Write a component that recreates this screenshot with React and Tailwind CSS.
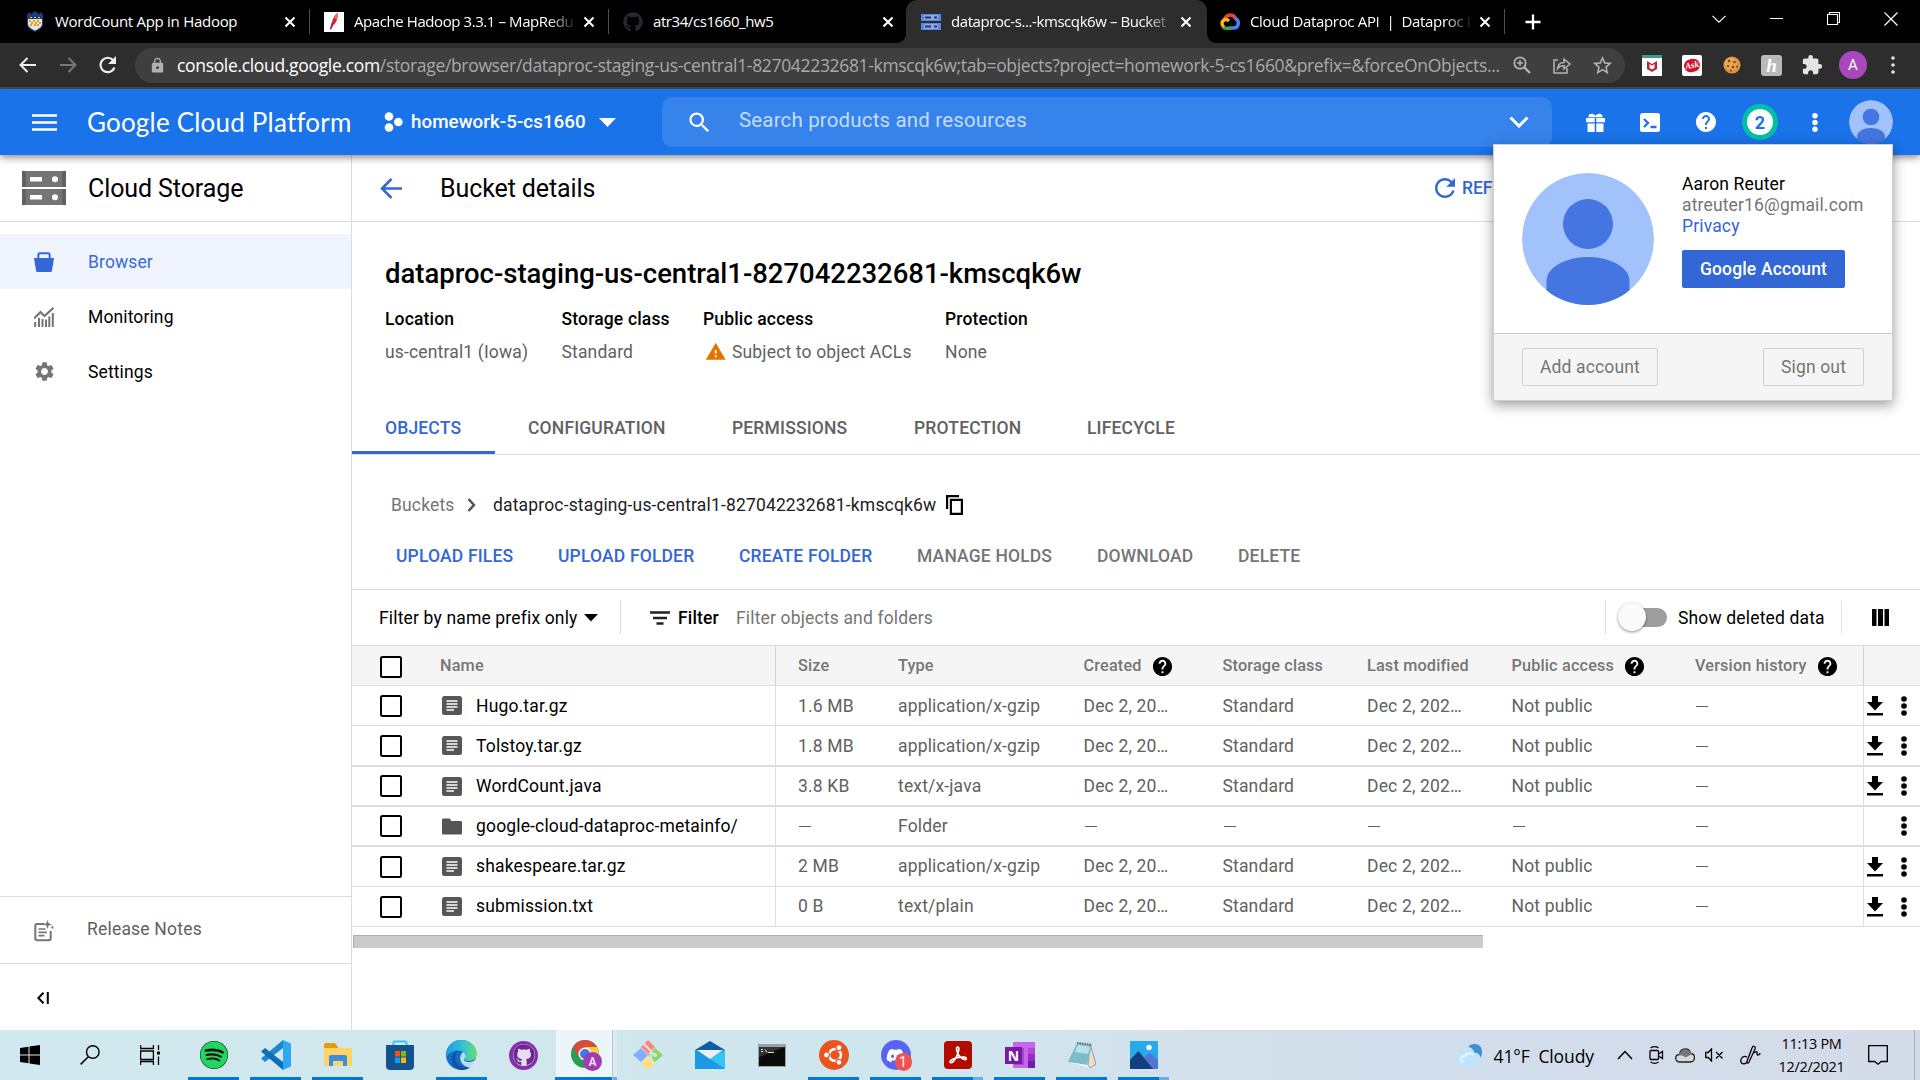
import React from "react";
import { MdSearch, MdSettings, MdWarning, MdHelp, MdExtension, MdLock, MdRefresh, MdStarOutline } from "react-icons/md";
import { FaGithub, FaSpotify, FaDiscord } from "react-icons/fa";

function Svg({ w, h, children, className = "" }) {
  return (
    <svg width={w} height={h} viewBox={`0 0 ${w} ${h}`} fill="none" className={"shrink-0 " + className}>
      {children}
    </svg>
  );
}

const Close = () => (
  <Svg w={12} h={12}><path d="M1.5 1.5l9 9M10.5 1.5l-9 9" stroke="#fff" strokeWidth="2.1" /></Svg>
);

/* ---------- favicons ---------- */
const Crest = () => (
  <Svg w={20} h={22}>
    <path d="M2 4l2-3 2 2 4-3 4 3 2-2 2 3v9c0 4-4 6-8 8-4-2-8-4-8-8z" fill="#1d3a7a" />
    <path d="M3 5h14v8c0 3-3.500 5-7 6.500C6.500 18 3 16 3 13z" fill="#e8e6dc" />
    <path d="M4 9h2v2H4zM8 9h2v2H8zM12 9h2v2h-2zM6 11h2v2H6zM10 11h2v2h-2zM14 11h2v2h-2zM5 13h2v2H5zM9 13h2v2H9zM12 13h2v2h-2z" fill="#d9a520" />
    <path d="M3 5h14v3H3z" fill="#1d3a7a" /><path d="M5 6h2v1H5zM9 6h2v1H9zM13 6h2v1h-2z" fill="#e8c558" />
  </Svg>
);
const Feather = () => (
  <Svg w={20} h={20}>
    <path d="M0 0h20v20H0z" fill="#fff" />
    <path d="M14 1c-3 1-5 5-6 9l-2 7 1 .5 2-4c3-2 5-7 5-12.500z" fill="#d4213d" />
    <path d="M14 1c-2 1-3 3-4 5l3 1c1-2 1-4 1-6z" fill="#f0803c" />
    <path d="M8 10l-2 7 1 .5 2-4z" fill="#8a2a7c" />
  </Svg>
);
const StorageFav = () => (
  <Svg w={20} h={16}>
    <path d="M0 0h20v7H0zM0 9h20v7H0z" fill="#5c85de" />
    <path d="M3 1h14v5H3zM3 10h14v5H3z" fill="#86a8ee" />
    <path d="M4 2.500h6v2H4zM13 2.500h3v2h-3zM4 11.500h6v2H4zM13 11.500h3v2h-3z" fill="#26375f" />
  </Svg>
);
const CloudFav = () => (
  <Svg w={20} h={17}>
    <path d="M4.500 6.500C5.500 3.500 8 2 10.500 2s4 1.500 5 3.500" stroke="#ea4335" strokeWidth="3.600" />
    <path d="M15 5c2.500 1.500 3.500 3.500 3.300 5.500-.2 2.600-2 4.500-4.800 4.500H10" stroke="#4285f4" strokeWidth="3.400" />
    <path d="M11 15.200H6c-1.200 0-2-.3-2.800-1" stroke="#34a853" strokeWidth="3.400" />
    <path d="M4 14c-2.500-2-2.800-5 0-7 2-1 3.500-.5 5 1" stroke="#fbbc04" strokeWidth="3.400" />
  </Svg>
);

function Tab({ icon, title, last, className = "", fade = "" }) {
  return (
    <div className={"flex h-full shrink-0 items-center " + className}>
      <div className="flex w-5 shrink-0 justify-center">{icon}</div>
      <div className={"ml-[10px] w-[221px] shrink-0 whitespace-pre " + fade}>{title}</div>
      <div className="ml-[8px]"><Close /></div>
      {last && <div className="ml-[13px] h-[25px] w-px bg-[#505050]" />}
    </div>
  );
}

const fadeOut = "[mask-image:linear-gradient(to_right,#000_88%,transparent_101%)]";

function TabStrip() {
  return (
    <div className="flex h-[43px] items-center bg-black font-['Open_Sans',sans-serif] text-[15px] tracking-[-0.42px] text-white">
      <Tab className="w-[311px] pl-[25px] tracking-[-0.28px]" icon={<Crest />} title="WordCount App in Hadoop" last />
      <Tab className="w-[299px] pl-[13px]" icon={<Feather />} title="Apache Hadoop 3.3.1 – MapRedu" last fade={fadeOut} />
      <Tab className="w-[296px] pl-[13px]" icon={<FaGithub size={20} color="#24292f" />} title="atr34/cs1660_hw5" />
      <div className="relative h-full w-[301px] rounded-t-[11px] bg-[#2d2d2d]">
        <Tab className="pl-[15px]" icon={<StorageFav />} title="dataproc-s...-kmscqk6w – Bucket" fade={fadeOut} />
        <svg className="absolute bottom-0 -left-[10px]" width="10" height="10"><path d="M10 0v10H0C6 10 10 6 10 0z" fill="#2d2d2d" /></svg>
        <svg className="absolute -right-[10px] bottom-0" width="10" height="10"><path d="M0 0v10h10C4 10 0 6 0 0z" fill="#2d2d2d" /></svg>
      </div>
      <Tab className="w-[298px] pl-[13px] tracking-[-0.34px]" icon={<CloudFav />} title="Cloud Dataproc API  |  Dataproc D" last fade={fadeOut} />
      <Svg w={16} h={16} className="ml-[20px]"><path d="M8 .5v15M.5 8h15" stroke="#fff" strokeWidth="2.300" /></Svg>
      <div className="ml-[171px] flex items-center pb-[6px]">
        <Svg w={14} h={8}><path d="M.5.8L7 7.200 13.500.8" stroke="#fff" strokeWidth="1.100" /></Svg>
        <Svg w={13} h={1} className="ml-[44px]"><path d="M0 .5h13" stroke="#fff" /></Svg>
        <Svg w={13} h={13} className="ml-[44px]"><path d="M.5 2.500h10v10H.5zM2.500 2.500v-2h10v10h-2" stroke="#fff" strokeWidth="1.100" /></Svg>
        <Svg w={14} h={14} className="ml-[44px]"><path d="M.5.5l13 13M13.500.5l-13 13" stroke="#fff" strokeWidth="1.200" /></Svg>
      </div>
    </div>
  );
}

function AddressBar() {
  return (
    <div className="flex h-[46px] items-center border-b-2 border-[#4d4d4d] bg-[#2d2d2d]">
      <Svg w={18} h={16} className="ml-[19px]"><path d="M17 8H2M8.500 1L1.500 8l7 7" stroke="#eee" strokeWidth="2" /></Svg>
      <Svg w={18} h={16} className="ml-[22px]"><path d="M1 8h15M9.500 1l7 7-7 7" stroke="#777" strokeWidth="2" /></Svg>
      <Svg w={20} h={18} className="ml-[21px]"><path d="M16.500 11.500A7.200 7.200 0 1 1 15 4" stroke="#eee" strokeWidth="2.200" /><path d="M18 0v8h-8z" fill="#eee" /></Svg>
      <div className="ml-[17px] flex h-[35px] w-[1490px] shrink-0 items-center rounded-full bg-[#3f3f3f]">
        <MdLock size={17} color="#aeb2b8" className="ml-[14px] shrink-0" />
        <div className="ml-[11px] w-[1327px] shrink-0 font-['Open_Sans',sans-serif] text-[17.5px] tracking-[-0.33px] whitespace-nowrap text-[#a9a9a9]">
          <span className="text-white">console.cloud.google.com</span>/storage/browser/dataproc-staging-us-central1-827042232681-kmscqk6w;tab=objects?project=homework-5-cs1660&amp;prefix=&amp;forceOnObjects...
        </div>
        <Svg w={18} h={18} className="ml-[9px]"><circle cx="7" cy="7" r="5.700" stroke="#b4b4b4" strokeWidth="1.700" /><path d="M11.300 11.300l5.700 5.700" stroke="#b4b4b4" strokeWidth="2.300" /><path d="M7 4v6M4 7h6" stroke="#b4b4b4" strokeWidth="1.500" /></Svg>
        <Svg w={20} h={18} className="ml-[21px]"><path d="M6 4H2v13h13v-5M5.500 12.500c.5-4 3-6 6.500-6V3l6 5-6 5V9.800c-3 0-5 .7-6.500 2.700z" stroke="#b4b4b4" strokeWidth="1.500" /></Svg>
        <MdStarOutline size={23} color="#b4b4b4" className="ml-[19px] shrink-0" />
      </div>
      <Svg w={20} h={21} className="ml-[17px]"><path d="M0 0h20v21H0z" fill="#fff" /><path d="M0 0h20v3H0z" fill="#3d9c84" /><path d="M5 6l5 3 5-3v8l-5 3-5-3z" fill="#c8202f" /><path d="M7.500 9l2.500 1.500L12.500 9v4L10 14.500 7.500 13z" fill="#fff" /></Svg>
      <div className="ml-[20px] flex h-[21px] w-5 shrink-0 items-center justify-center rounded-[2px] bg-white"><span className="-rotate-12 rounded-full bg-[#d0142c] px-px font-['Liberation_Serif',serif] text-[9px] leading-[13px] font-bold text-white italic">Ask</span></div>
      <Svg w={18} h={18} className="ml-[21px]"><circle cx="9" cy="9" r="8.600" fill="#dc9340" /><circle cx="8" cy="8" r="6.500" fill="#e6a757" /><g fill="#7a4018"><circle cx="6" cy="5" r="1.200" /><circle cx="11.500" cy="6" r="1.200" /><circle cx="5" cy="10" r="1.100" /><circle cx="10" cy="11" r="1.300" /><circle cx="14" cy="10.500" r="1" /><circle cx="8" cy="14.500" r="1" /></g></Svg>
      <div className="ml-[20px] flex h-[21px] w-[21px] shrink-0 items-center justify-center rounded-[3px] bg-[#b9b9b9] font-['Liberation_Serif',serif] text-[19px] leading-none font-bold text-white italic">h</div>
      <MdExtension size={22} color="#e4e4e4" className="ml-[19px] shrink-0" />
      <div className="ml-[16px] flex h-7 w-7 shrink-0 items-center justify-center rounded-full bg-[#ab47bc] text-[15px] text-white">A</div>
      <Svg w={4} h={18} className="ml-[24px]"><g fill="#e4e4e4"><circle cx="2" cy="2" r="1.800" /><circle cx="2" cy="9" r="1.800" /><circle cx="2" cy="16" r="1.800" /></g></Svg>
    </div>
  );
}

function Avatar({ size, className = "" }) {
  return (
    <svg width={size} height={size} viewBox="0 0 132 132" className={"shrink-0 rounded-full " + className}>
      <circle cx="66" cy="66" r="66" fill="#a1c2fa" />
      <circle cx="66" cy="51" r="25" fill="#4575e0" />
      <path d="M24.500 140V108c0-14 20-24 41.500-24s41.500 10 41.500 24v32z" fill="#4575e0" />
    </svg>
  );
}

function CloudHeader() {
  return (
    <div className="relative z-10 flex h-[66px] items-center bg-[#1a73e8] text-white shadow-[0_2px_8px_rgba(0,0,0,0.5)]">
      <Svg w={25} h={17} className="ml-[32px]"><path d="M0 1.500h25M0 8.500h25M0 15.500h25" stroke="#fff" strokeWidth="2.700" /></Svg>
      <div className="ml-[30px] w-[297px] shrink-0 font-['Lato',sans-serif] text-[26px] tracking-[0.2px] whitespace-nowrap">Google Cloud Platform</div>
      <Svg w={19} h={20}><g fill="#fff"><circle cx="5" cy="4.500" r="4.300" /><circle cx="14.300" cy="10" r="4.300" /><circle cx="5" cy="15.500" r="4.300" /></g></Svg>
      <div className="ml-[8px] w-[188px] shrink-0 pt-px text-[18.75px] font-medium tracking-[0.05px] whitespace-nowrap">homework-5-cs1660</div>
      <Svg w={17} h={9}><path d="M0 0h17L8.500 9z" fill="#fff" /></Svg>
      <div className="ml-[46px] flex h-[50px] w-[890px] shrink-0 items-center rounded-[10px] bg-[#3683eb]">
        <MdSearch size={27} className="ml-[24px] shrink-0" />
        <div className="ml-[26px] w-[770px] shrink-0 pb-[3px] text-[20.500px] tracking-[0.16px] text-[#c4dbfa]">Search products and resources</div>
        <Svg w={20} h={12}><path d="M1.500 1.500L10 10l8.500-8.500" stroke="#fff" strokeWidth="3" /></Svg>
      </div>
      <Svg w={19} h={19} className="ml-[34px]"><path d="M1.500 10.500h7.200V19H1.500zM10.300 10.500h7.200V19h-7.200zM0 5h8.700v4.300H0zM10.300 5H19v4.300h-8.700z" fill="#fff" /><path d="M2.500 4.300c-.5-4 4-4.500 7-1.500 3-3 7.500-2.500 7 1.500z" fill="#fff" /></Svg>
      <Svg w={20} h={19} className="ml-[35px]"><rect width="20" height="19" rx="2.500" fill="#fff" /><path d="M4 6l4 4-4 4M10.500 14h6" stroke="#1a73e8" strokeWidth="2.300" /></Svg>
      <MdHelp size={24} className="ml-[34px] shrink-0" />
      <div className="ml-[24px] flex h-9 w-9 shrink-0 items-center justify-center rounded-full border-[5px] border-[#00bfa5] bg-white text-[18px] font-bold text-[#1a73e8]">2</div>
      <Svg w={6} h={19} className="ml-[34px]"><g fill="#fff"><circle cx="3" cy="2.800" r="2.700" /><circle cx="3" cy="9.500" r="2.700" /><circle cx="3" cy="16.200" r="2.700" /></g></Svg>
      <Avatar size={44} className="ml-[31px]" />
      <AccountMenu />
    </div>
  );
}

function AccountMenu() {
  return (
    <div className="absolute top-[55px] left-[1493px] h-[257px] w-[400px] border border-[#cfcfcf] bg-white text-[17.5px] leading-[21px] tracking-[0.15px] text-black shadow-[0_4px_12px_rgba(0,0,0,0.4)]">
      <div className="flex h-[188px]">
        <Avatar size={132} className="mt-[28px] ml-[28px]" />
        <div className="mt-[29px] ml-[28px]">
          <div>Aaron Reuter</div>
          <div className="text-[#757575]">atreuter16@gmail.com</div>
          <div className="text-[#3367d6]">Privacy</div>
          <div className="mt-[13px] flex h-[38px] w-[163px] items-center justify-center rounded-[2px] bg-[#3367d6] pt-px font-medium whitespace-nowrap text-white">Google Account</div>
        </div>
      </div>
      <div className="flex h-[67px] items-center justify-between border-t border-[#ccc] bg-[#f5f5f5] pr-[28px] pl-[28px] text-[#757575]">
        <div className="flex h-[38px] w-[136px] items-center justify-center rounded-[2px] border border-[#d0d0d0] pt-px">Add account</div>
        <div className="flex h-[38px] w-[101px] items-center justify-center rounded-[2px] border border-[#d0d0d0] pt-px">Sign out</div>
      </div>
    </div>
  );
}

function Sidebar() {
  return (
    <div className="flex w-[352px] shrink-0 flex-col border-r border-[#dcdcdc] text-[17.5px] tracking-[0.12px]">
      <div className="flex h-[67px] items-center border-b border-[#dcdcdc] pl-[22px] text-[25px] tracking-[-0.1px]">
        <Svg w={44} h={34}>
          <path d="M0 0h44v16H0zM0 18h44v16H0z" fill="#757575" />
          <path d="M0 0h4v16H0zM0 18h4v16H0zM40 0h4v16h-4zM40 18h4v16h-4z" fill="#616161" />
          <path d="M8 6h12v4.500H8zM8 24h12v4.500H8z" fill="#fff" /><circle cx="33" cy="8.200" r="3" fill="#fff" /><circle cx="33" cy="26.200" r="3" fill="#fff" />
        </Svg>
        <div className="ml-[22px] pt-[2px]">Cloud Storage</div>
      </div>
      <div className="mt-[12px] flex h-[55px] items-center bg-[#eff4fe] pl-[34px] text-[#3b69d6]">
        <Svg w={20} h={20}><path d="M0 6h20l-2 12.500c-.2 1-.8 1.500-2 1.500H4c-1.200 0-1.800-.5-2-1.500z" fill="#3367d6" /><path d="M4.300 6.500V3.200C4.300 2 5 1.300 6 1.300h8c1 0 1.700.7 1.700 1.900v3.300" stroke="#3367d6" strokeWidth="2" /></Svg>
        <div className="ml-[34px] pt-[2px]">Browser</div>
      </div>
      <div className="flex h-[55px] items-center pl-[34px]">
        <Svg w={20} h={20}><path d="M0 11.500l6.500-6.500 4 4L19.500.8" stroke="#757575" strokeWidth="2.200" /><path d="M1.200 20v-5M5 20v-9M8.500 20v-8M12 20v-7.500M15.300 20v-10.500M18.800 20V6" stroke="#757575" strokeWidth="2" /></Svg>
        <div className="ml-[34px] pt-[2px]">Monitoring</div>
      </div>
      <div className="flex h-[55px] items-center pl-[32.500px]">
        <MdSettings size={23} color="#757575" />
        <div className="ml-[32.500px] pt-[2px]">Settings</div>
      </div>
      <div className="flex-1" />
      <div className="flex h-[68px] items-center border-y border-[#dcdcdc] pl-[34px] text-[#616161]">
        <Svg w={20} h={22} className="mt-px"><path d="M10.500 4H3.200C2 4 1.300 4.700 1.300 5.800v12.700c0 1.100.7 1.800 1.900 1.800h11.600c1.200 0 1.900-.7 1.900-1.800V11" stroke="#757575" strokeWidth="2" /><path d="M4.500 9h7M4.500 12.300h8.500M4.500 15.700h6" stroke="#757575" strokeWidth="1.700" /><path d="M13.500 0l1.200 3.200L18 4.400l-3.300 1.200-1.200 3.300-1.200-3.300L9.500 4.400l2.800-1.200zM18.500 5l.5 1.700 1 .5-1 .6-.5 1.700-.6-1.700-1.600-.6 1.600-.5z" fill="#757575" /></Svg>
        <div className="ml-[33px] pb-[2px] tracking-[0.2px]">Release Notes</div>
      </div>
      <div className="flex h-[66px] items-center pt-[2px] pl-[37px]">
        <Svg w={12} h={12}><path d="M6.500.8L1.300 6l5.200 5.200M10.800 0v12" stroke="#000" strokeWidth="2" /></Svg>
      </div>
    </div>
  );
}

const Meta = ({ label, className, children }) => (
  <div className={"shrink-0 whitespace-nowrap " + className}>
    <div className="h-[33px] font-medium">{label}</div>
    <div className="flex h-[33px] items-start text-[#616161]">{children}</div>
  </div>
);

const Checkbox = () => <div className="ml-[28px] h-[22px] w-[22px] shrink-0 rounded-[2.500px] border-2 border-black bg-white" />;

const rows = [
  { name: "Hugo.tar.gz", size: "1.6 MB", type: "application/x-gzip", h: "h-[40px] border-b", t: "pt-[2px]" },
  { name: "Tolstoy.tar.gz", size: "1.8 MB", type: "application/x-gzip", h: "h-[41px] border-b-2", t: "pt-[2px]" },
  { name: "WordCount.java", size: "3.8 KB", type: "text/x-java", h: "h-[40px] border-b-2", t: "pt-0" },
  { name: "google-cloud-dataproc-metainfo/", size: "—", type: "Folder", folder: true, h: "h-[40px] border-b-2", t: "pt-0" },
  { name: "shakespeare.tar.gz", size: "2 MB", type: "application/x-gzip", h: "h-[40px] border-b", t: "pt-0" },
  { name: "submission.txt", size: "0 B", type: "text/plain", h: "h-[40px] border-b", t: "pt-0" },
];

const Help = () => <MdHelp size={23} color="#000" className="ml-[9px] shrink-0" />;
const Dash = () => <div className="ml-px h-px w-3 bg-[#616161]" />;

function ObjectRow({ r }) {
  const t = (s) => (r.folder ? <Dash /> : s);
  return (
    <div className={"flex shrink-0 border-[#dedede] text-[#616161] " + r.h}>
      <div className="flex w-[424px] shrink-0 items-center border-r border-[#dedede]">
        <Checkbox />
        {r.folder ? (
          <Svg w={20} h={17} className="ml-[40px]"><path d="M0 2c0-1 .6-1.500 1.500-1.500h6l2 2.500h9c.9 0 1.500.5 1.500 1.500V15c0 1-.6 1.500-1.500 1.500h-17C.6 16.500 0 16 0 15z" fill="#555" /></Svg>
        ) : (
          <Svg w={20} h={19} className="ml-[40px]"><rect width="20" height="19" rx="2.500" fill="#565656" /><path d="M4.500 5h11M4.500 8h11M4.500 11h11M4.500 14h7.500" stroke="#fff" strokeWidth="1.300" /></Svg>
        )}
        <div className={"ml-[14px] whitespace-nowrap text-black " + r.t}>{r.name}</div>
      </div>
      <div className={"flex w-[1088px] shrink-0 items-center border-r border-[#dedede] pl-[22px] whitespace-nowrap " + r.t}>
        <div className="w-[100px] shrink-0">{t(r.size)}</div>
        <div className="w-[185.500px] shrink-0">{r.type}</div>
        <div className="w-[139px] shrink-0">{t("Dec 2, 20…")}</div>
        <div className="w-[144.500px] shrink-0">{t("Standard")}</div>
        <div className="w-[144.500px] shrink-0">{t("Dec 2, 202…")}</div>
        <div className="w-[183.500px] shrink-0">{t("Not public")}</div>
        <Dash />
      </div>
      <div className="flex flex-1 items-center justify-end pr-[13px]">
        {!r.folder && <Svg w={16} h={20} className="mr-[18px]"><path d="M5 0h6v6h5l-8 8.500L0 6h5zM0 17h16v2.500H0z" fill="#000" /></Svg>}
        <Svg w={6} h={20}><g fill="#000"><circle cx="3" cy="3" r="2.800" /><circle cx="3" cy="10" r="2.800" /><circle cx="3" cy="17" r="2.800" /></g></Svg>
      </div>
    </div>
  );
}

function Main() {
  return (
    <div className="flex min-w-0 flex-1 flex-col overflow-hidden text-[17.5px] tracking-[0.16px]">
      <div className="flex h-[67px] shrink-0 items-center border-b border-[#dcdcdc] whitespace-nowrap">
        <Svg w={22} h={21} className="ml-[28px]"><path d="M22 10.500H2M11.500 1L2 10.500l9.500 9.500" stroke="#3367d6" strokeWidth="2.500" /></Svg>
        <div className="ml-[38px] w-[990px] shrink-0 pt-[2px] text-[25px] tracking-[-0.1px]">Bucket details</div>
        <MdRefresh size={30} color="#3367d6" className="shrink-0" />
        <div className="ml-[2px] font-medium tracking-[-0.1px] text-[#3367d6]">REFRESH</div>
      </div>
      <div className="mt-[31px] h-[40px] shrink-0 pl-[33px] text-[27.500px] leading-[42px] font-medium tracking-[-0.02px] whitespace-nowrap">dataproc-staging-us-central1-827042232681-kmscqk6w</div>
      <div className="mt-[15px] flex h-[76px] shrink-0 pl-[33px] leading-[22px]">
        <Meta className="w-[176.500px]" label="Location">us-central1 (Iowa)</Meta>
        <Meta className="w-[141.500px]" label="Storage class">Standard</Meta>
        <Meta className="w-[242px]" label="Public access"><MdWarning size={21.500} color="#e37400" className="ml-[2px] mr-[5.500px]" />Subject to object ACLs</Meta>
        <Meta className="w-[120px]" label="Protection">None</Meta>
      </div>
      <div className="flex h-[71px] shrink-0 items-end border-b border-[#dcdcdc] font-medium text-[#616161]">
        <div className="flex h-[56px] w-[143px] shrink-0 items-center border-b-[3px] border-[#3367d6] pt-[8px] pl-[33px] text-[#3367d6]">OBJECTS</div>
        <div className="flex h-[56px] items-center pt-[5px]">
          <div className="w-[204px] shrink-0 pl-[33px]">CONFIGURATION</div>
          <div className="w-[182px] shrink-0 pl-[33px]">PERMISSIONS</div>
          <div className="w-[173px] shrink-0 pl-[33px]">PROTECTION</div>
          <div className="pl-[33px]">LIFECYCLE</div>
        </div>
      </div>
      <div className="mt-[33px] flex h-[34px] shrink-0 items-center pl-[39px] whitespace-nowrap">
        <div className="w-[76px] shrink-0 text-[#757575]">Buckets</div>
        <Svg w={9} h={14}><path d="M1.500 1L7 7l-5.500 6" stroke="#555" strokeWidth="2.500" /></Svg>
        <div className="ml-[17px] w-[453px] shrink-0 text-[#212121]">dataproc-staging-us-central1-827042232681-kmscqk6w</div>
        <Svg w={17} h={20}><path d="M1.100 14V1.100H13M4.900 4.900h11v14h-11z" stroke="#000" strokeWidth="2.200" /></Svg>
      </div>
      <div className="flex h-[68px] shrink-0 items-center border-b border-[#dcdcdc] pt-[2px] pl-[44px] font-medium whitespace-nowrap text-[#757575]">
        <div className="w-[162px] shrink-0 text-[#3367d6]">UPLOAD FILES</div>
        <div className="w-[181px] shrink-0 text-[#3367d6]">UPLOAD FOLDER</div>
        <div className="w-[178px] shrink-0 text-[#3367d6]">CREATE FOLDER</div>
        <div className="w-[180px] shrink-0">MANAGE HOLDS</div>
        <div className="w-[141px] shrink-0">DOWNLOAD</div>
        <div>DELETE</div>
      </div>
      <div className="flex h-[55px] shrink-0 items-center pl-[27px] whitespace-nowrap">
        <div className="w-[205px] shrink-0 pt-[2px]">Filter by name prefix only</div>
        <Svg w={14} h={8}><path d="M0 0h14L7 7.500z" fill="#000" /></Svg>
        <div className="ml-[22px] h-[33px] w-px bg-[#dcdcdc]" />
        <Svg w={20} h={14} className="ml-[29px]"><path d="M0 1.500h20M3 7h14M6.500 12.500h7" stroke="#212121" strokeWidth="2.500" /></Svg>
        <div className="ml-[8px] w-[58px] shrink-0 pt-[2px] font-medium">Filter</div>
        <div className="w-[869px] shrink-0 pt-[2px] text-[#757575]">Filter objects and folders</div>
        <div className="h-[33px] w-px bg-[#dcdcdc]" />
        <div className="relative ml-[25px] h-[19px] w-[36px] shrink-0 rounded-full bg-[#9e9e9e]">
          <div className="absolute top-[-5px] -left-[13px] h-7 w-7 rounded-full bg-[#fafafa] shadow-[0_1px_3px_rgba(0,0,0,0.45)]" />
        </div>
        <div className="ml-[11px] w-[163px] shrink-0 pt-[2px]">Show deleted data</div>
        <div className="h-[33px] w-px bg-[#e4e4e4]" />
        <Svg w={17} h={17} className="ml-[30px]"><path d="M0 0h4.500v17H0zM6 0h5v17H6zM12.500 0H17v17h-4.500z" fill="#000" /></Svg>
      </div>
      <div className="flex h-[41px] shrink-0 border-y border-[#dedede] bg-[#f5f5f5] text-[16.250px] font-medium text-[#757575]">
        <div className="flex w-[424px] shrink-0 items-center border-r border-[#d4d4d4]"><div className="pt-[2px]"><Checkbox /></div><div className="ml-[38px] pt-px">Name</div></div>
        <div className="flex w-[1088px] shrink-0 items-center border-r border-[#d4d4d4] pt-px pl-[22px] whitespace-nowrap">
          <div className="w-[100px] shrink-0">Size</div>
          <div className="w-[185.500px] shrink-0">Type</div>
          <div className="flex w-[139px] shrink-0 items-center">Created<Help /></div>
          <div className="w-[144.500px] shrink-0">Storage class</div>
          <div className="w-[144.500px] shrink-0">Last modified</div>
          <div className="flex w-[183.500px] shrink-0 items-center">Public access<Help /></div>
          <div className="flex shrink-0 items-center">Version history<Help /></div>
        </div>
      </div>
      {rows.map((r) => <ObjectRow key={r.name} r={r} />)}
      <div className="mt-[8px] ml-[1px] h-[13px] w-[1130px] shrink-0 border-t border-l border-[#b0b0b0] bg-[#cbcbcb]" />
    </div>
  );
}

/* ---------- taskbar ---------- */
const icons = {
  vscode: <Svg w={30} h={30}><path d="M22 0l8 3.500v23L22 30z" fill="#2ea8f0" /><path d="M22 0v8L4 22l-4-3.500z" fill="#1d87cf" /><path d="M0 11.500L4 8l18 14v8z" fill="#0e6fb8" /></Svg>,
  explorer: <Svg w={28} h={24}><path d="M0 2C0 .7.700 0 2 0h9l3 4v8H0z" fill="#e29d0a" /><path d="M0 5h28v17c0 .8-.4 1-1 1H1c-.6 0-1-.2-1-1z" fill="#fdd467" /><path d="M5 23v-9c0-1.300.8-2 2-2h14c1.200 0 2 .7 2 2v9h-4v-5h-10v5z" fill="#3a8edb" /></Svg>,
  store: <Svg w={30} h={30}><path d="M8.500 6V2.800c0-.8.500-1.300 1.300-1.300h10.400c.8 0 1.300.5 1.300 1.300V6" stroke="#34c6f4" strokeWidth="2" /><path d="M1 5h28v21c0 2.500-1.500 4-4 4H5c-2.500 0-4-1.500-4-4z" fill="#15538f" /><path d="M10 11h5v5.500h-5z" fill="#f25022" /><path d="M16 11h5v5.500h-5z" fill="#7fba00" /><path d="M10 17.500h5V23h-5z" fill="#00a4ef" /><path d="M16 17.500h5V23h-5z" fill="#ffb900" /></Svg>,
  edge: <svg width="31" height="30" viewBox="0 0 31 30"><defs><linearGradient id="eg" x1="0" x2="1"><stop stopColor="#1b9de2" /><stop offset=".55" stopColor="#35c1d8" /><stop offset="1" stopColor="#6bde6a" /></linearGradient></defs><circle cx="15" cy="15" r="15" fill="#0c6fc4" /><path d="M.5 12C2 4.500 8 0 15.500 0 24 0 31 6 31 13.500c0 5-4 7.500-8 7.500-3 0-5.500-1-4.500-2.500 3-4-.5-8-6-8C7 10.500 3 13 .5 17z" fill="url(#eg)" /><path d="M12 11c-3 3-3.500 8-1 12 3 4.500 9 5.500 16.500 2.200C25 28 20 30 15 30 9 29 5 24 6 18c.5-4 3-6.500 6-7z" fill="#13529d" /><path d="M17 12c3.500 2 3 5 1.200 7-1 1.700 1.800 3 5 3 3.500-.2 6-1.500 7.800-4V27c-4 2-9 1-12-1-6-4-6-10-2-14z" fill="#d1e7ee" opacity=".9" /></svg>,
  github: <div className="flex h-[29px] w-[29px] items-center justify-center rounded-full bg-[#8530a8]"><div className="flex h-[22px] w-[22px] items-center justify-center rounded-full bg-[#e9dcf0]"><FaGithub size={22} color="#6e2791" /></div></div>,
  git: <Svg w={30} h={30}><path d="M15 0l7 7-7 7-7-7z" fill="#ff8380" /><path d="M8 8l7 7-7 7-8-7z" fill="#7fb0ff" /><path d="M22 8l8 7-8 7-7-7z" fill="#8fd65f" /><path d="M15 16l7 7-7 7-7-7z" fill="#ffe27f" /><path d="M10 3l8 8v8M18 12l5 4" stroke="#d1e7ee" strokeWidth="2" /><circle cx="18" cy="20" r="2" fill="#d1e7ee" /><circle cx="22" cy="15" r="2" fill="#d1e7ee" /></Svg>,
  mail: <Svg w={30} h={28}><path d="M0 9l15-9 15 9v6H0z" fill="#0b5cab" /><path d="M0 9h30v19H0z" fill="#1d9ae4" /><path d="M30 9v19L15 18z" fill="#36c4f5" /><path d="M2 9h26L15 18z" fill="#f0eeee" /></Svg>,
  cmd: <Svg w={28} h={23}><path d="M0 0h28v23H0z" fill="#9aa0a4" /><path d="M1 3h26v19H1z" fill="#0a0a0a" /><path d="M1 3h26L1 13z" fill="#333" /><path d="M3 5.500h2M3 7.500h2M7 5.500l2 3M10 8.500h6" stroke="#ddd" /></Svg>,
  acrobat: <Svg w={28} h={28}><rect width="28" height="28" rx="4" fill="#b30b00" /><path d="M13.500 6c2.500 0 1.200 5-1 9.500C10.500 19.500 8 22.500 6.500 21.500c-2-1.500 3-4.500 8-5.200 4-.6 8-.3 7.800 1.500-.3 1.800-5 .2-7.300-3.300C13 12 11.500 6 13.500 6z" stroke="#fff" strokeWidth="1.700" /></Svg>,
  onenote: <Svg w={30} h={26}><path d="M8 0h22v26H8z" fill="#ca64ea" /><path d="M23 6h7v6h-7z" fill="#ae4bd5" /><path d="M23 12h7v7h-7z" fill="#9332bf" /><path d="M23 19h7v7h-7z" fill="#7719aa" /><path d="M0 5h17v17H0z" fill="#7719aa" /><path d="M17 6h2v17H9v-1h8z" fill="#5b1385" opacity=".35" /><text x="8.500" y="18.500" textAnchor="middle" fill="#fff" fontSize="14" fontWeight="700" fontFamily="Open Sans">N</text></Svg>,
  notepad: <Svg w={28} h={27}><path d="M22 2l6 20-6 4-2-3z" fill="#e6e0d2" stroke="#8f7a55" strokeWidth=".7" /><path d="M9 1l15 2-5 20L0 20z" fill="#7cbccb" /><path d="M10 3l12 2-2 7L7 10z" fill="#b8e2ea" /><path d="M0 20l19 3 3 3-3-1z" fill="#eef3f4" /><path d="M9 .8l15 2" stroke="#666" strokeWidth="2" strokeDasharray="1.500 1" /></Svg>,
  photos: <Svg w={28} h={28}><path d="M0 1c0-.6.400-1 1-1h26c.6 0 1 .4 1 1v26c0 .6-.4 1-1 1H1c-.6 0-1-.4-1-1z" fill="#2aa8ec" /><path d="M15 15l5-3 8 7v9H15z" fill="#5474d2" /><path d="M0 19l8.500-9L23 28H1c-.6 0-1-.4-1-1z" fill="#143f7d" /><circle cx="19" cy="6.500" r="2.700" fill="#fff" /></Svg>,
};

function ChromeIcon() {
  return (
    <svg width="32" height="31" viewBox="0 0 32 31" className="ml-[6px]">
      <circle cx="14" cy="14" r="14" fill="#2a9e55" />
      <path d="M1.900 7A14 14 0 0 1 26.100 7H14z" fill="#dc4a3d" /><path d="M1.900 7L8 17.500 14 7z" fill="#dc4a3d" />
      <path d="M26.100 7A14 14 0 0 1 14 28l6-10.500L14 7z" fill="#fccc3c" />
      <circle cx="14" cy="14" r="6.500" fill="#fff" /><circle cx="14" cy="14" r="5" fill="#3b7de2" />
      <circle cx="21.500" cy="21.500" r="9.500" fill="#a03bb3" /><text x="21.500" y="26" textAnchor="middle" fill="#f3d9f7" fontSize="12" fontWeight="700" fontFamily="Roboto">A</text>
    </svg>
  );
}

function Task({ children, open, grouped }) {
  return (
    <div className="flex h-full w-[62px] shrink-0 flex-col items-center">
      <div className="flex h-[47px] items-center pt-[3px]">{children}</div>
      {open && !grouped && <div className="h-[3px] w-[51px] bg-[#0078d7]" />}
      {grouped && <div className="flex h-[3px] w-[51px]"><div className="w-[41px] bg-[#0078d7]" /><div className="w-[10px] bg-[#66afe7]" /></div>}
    </div>
  );
}

function Taskbar() {
  return (
    <div className="flex h-[50px] items-center bg-[linear-gradient(to_right,#d0e8ee_0%,#d0e6ee_50%,#d2e0eb_62%,#d2ddeb_80%,#d4dbe8_100%)] text-black">
      <Svg w={20} h={20} className="ml-[20px]"><path d="M0 3l8.500-1.200v7.700H0zM9.500 1.600L20 0v9.500H9.500zM0 10.500h8.500v7.700L0 17zM9.500 10.500H20V20L9.500 18.400z" fill="#000" /></Svg>
      <Svg w={20} h={20} className="ml-[40px]"><circle cx="12.800" cy="7" r="6.300" stroke="#000" strokeWidth="1.400" /><path d="M8.300 11.700L.6 19.400" stroke="#000" strokeWidth="1.500" /></Svg>
      <Svg w={20} h={20} className="ml-[40px]"><path d="M.6 0v3.500h12.800V0M.6 20v-3.500h12.800V20M.6 6h12.800v8.500H.6zM18.500 0v5M18.500 11.500V20" stroke="#000" strokeWidth="1.300" /><path d="M17 6.500h3v3h-3z" fill="#000" /></Svg>
      <div className="ml-[22.500px] flex h-full shrink-0">
        <Task open><div className="flex h-[28px] w-[28px] items-center justify-center rounded-full bg-[#191414]"><FaSpotify size={28} color="#1ed760" /></div></Task>
        <Task open>{icons.vscode}</Task>
        <Task open>{icons.explorer}</Task>
        <Task>{icons.store}</Task>
        <Task open>{icons.edge}</Task>
        <Task>{icons.github}</Task>
        <div className="flex h-full w-[62px] shrink-0">
          <div className="ml-[1px] flex w-[57px] flex-col items-center border-r border-[#b5c7d0] bg-[#ecf5f9]">
            <div className="flex h-[47px] items-center pt-[4px]"><ChromeIcon /></div>
            <div className="h-[3px] w-[57px] bg-[#0078d7]" />
          </div>
          <div className="flex w-[4px] flex-col justify-end bg-[#dcebf2]"><div className="h-[3px] bg-[#66afe7]" /></div>
        </div>
        <Task>{icons.git}</Task>
        <Task>{icons.mail}</Task>
        <Task>{icons.cmd}</Task>
        <Task open><div className="flex h-[30px] w-[30px] items-center justify-center rounded-full bg-[#e95420]"><svg width="22" height="22" viewBox="0 0 22 22" fill="none"><circle cx="12" cy="11" r="6" stroke="#fff" strokeWidth="2.600" /><g fill="#fff" stroke="#e95420" strokeWidth="1.200"><circle cx="3.500" cy="11" r="3" /><circle cx="16" cy="3.700" r="3" /><circle cx="16" cy="18.300" r="3" /></g></svg></div></Task>
        <Task open>
          <div className="relative flex h-[30px] w-[30px] items-center justify-center rounded-full bg-[#5865f2]">
            <FaDiscord size={19} color="#fff" />
            <div className="absolute top-[13px] left-[14px] flex h-[18px] w-[17px] items-center justify-center rounded-full bg-[#f0524f] text-[14px] text-white">1</div>
          </div>
        </Task>
        <Task grouped>{icons.acrobat}</Task>
        <Task open>{icons.onenote}</Task>
        <Task open>{icons.notepad}</Task>
        <Task grouped>{icons.photos}</Task>
      </div>
      <Svg w={28} h={23} className="ml-[280px]"><path d="M12 6c1-4 4-6 7.500-6C24 0 27 3 27 8c0 4-2 8-5 9z" fill="#3f8fd6" /><path d="M6 22c-3.500 0-6-2-6-5.500 0-2.500 2-5 4.500-5.200C5 6 8 3 12 3c4 0 6.500 2 7.500 5.500 3.500 0 6.500 3 6.500 7s-3 6.500-6 6.500z" fill="#bfe3fa" /><path d="M9 18c-3 0-4-2-3-4s3-2 4-2c1-3 6-4 8-1" stroke="#e8f6ff" strokeWidth="2" /></Svg>
      <div className="ml-[11px] flex w-[121px] shrink-0 pt-[3px] font-['Open_Sans',sans-serif] text-[17.5px] tracking-[-0.12px] whitespace-pre">41°F  Cloudy</div>
      <Svg w={16} h={10} className="ml-[2px]"><path d="M1 9l7-7.500L15 9" stroke="#000" strokeWidth="1.500" /></Svg>
      <Svg w={15} h={18} className="ml-[16px]"><rect x="1" y="4.500" width="8.500" height="9" rx="1" stroke="#000" strokeWidth="1.300" /><path d="M9.500 8l4-2.500v7l-4-2.500M1.500 2c2.500-1.500 6-1.500 8 0M1.500 16c2.500 1.500 6 1.500 8 0" stroke="#000" strokeWidth="1.300" /></Svg>
      <Svg w={20} h={15} className="ml-[11px]"><path d="M5 14c-2.500 0-4.300-1.500-4.300-3.700S2.500 6.600 4.500 6.500C5 3 7.500 1 10.300 1c2.700 0 4.800 1.800 5.400 4.500 2.300.2 3.800 1.800 3.800 4.100 0 2.500-1.800 4.400-4 4.400z" fill="#d8d8d8" stroke="#222" strokeWidth="1.300" /><path d="M2 8C5 6.500 8 7.500 10.500 9.500L17 6C14 0 7 0 5 5z" fill="#777" /></Svg>
      <Svg w={19} h={14} className="ml-[10px]"><path d="M.7 4.500h2.500L6.500 1v12L3.200 9.500H.7zM11 4l6.500 6.500M17.500 4L11 10.500" stroke="#000" strokeWidth="1.300" /></Svg>
      <Svg w={21} h={20} className="ml-[16px]"><path d="M7 12c-4-2-7 2-6 5s6 2 6-1l5-13c1-3 4-2 3 1l-6 13c-1 2-3 1-2-1l4-10M14 8c2-2 4-2 3 1 0 2 3 1 3-1" stroke="#000" strokeWidth="1.300" /></Svg>
      <div className="ml-[12px] w-[78px] shrink-0 text-center font-['Open_Sans',sans-serif] text-[14.5px] leading-[23px] tracking-[-0.3px] whitespace-nowrap">11:13 PM<br />12/2/2021</div>
      <Svg w={20} h={20} className="ml-[17px]"><path d="M.7.7h18.600v15.800h-6L10 19.200 6.700 16.500h-6z" stroke="#000" strokeWidth="1.300" /></Svg>
      <div className="ml-auto h-full w-[6px] border-l border-[#a5b0bf]" />
    </div>
  );
}

export default function App() {
  return (
    <div className="flex h-[1080px] w-[1920px] flex-col overflow-hidden bg-white font-['Roboto',sans-serif] text-black">
      <TabStrip />
      <AddressBar />
      <CloudHeader />
      <div className="flex min-h-0 flex-1">
        <Sidebar />
        <Main />
      </div>
      <Taskbar />
    </div>
  );
}
